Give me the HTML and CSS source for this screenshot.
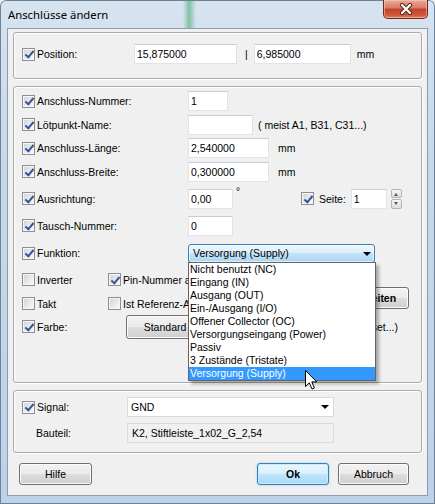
FILE: index.html
```html
<!DOCTYPE html>
<html lang="de">
<head>
  <meta charset="UTF-8" />
  <title>Anschlüsse ändern</title>
  <link rel="stylesheet" href="styles.css">
</head>
<body>

  <div class="window">
    <div class="titlebar">
      <span class="title">Anschlüsse ändern</span>
      <span class="close">
        <svg width="14" height="12" viewBox="0 0 14 12">
          <path d="M3 2 L11 10 M11 2 L3 10" stroke="#4a2418" stroke-width="4.2" stroke-linecap="round"/>
          <path d="M3 2 L11 10 M11 2 L3 10" stroke="#fff" stroke-width="2.4" stroke-linecap="round"/>
        </svg>
      </span>
    </div>

    <div class="client">

      <!-- Position -->
      <div class="panel p-pos">
        <div class="row">
          <label class="lbl w-pos"><span class="cb on"></span>Position:</label>
          <input class="field" style="width:103px" value="15,875000">
          <span class="sep">|</span>
          <input class="field" style="width:97px" value="6,985000">
          <span class="unit">mm</span>
        </div>
      </div>

      <!-- Anschluss -->
      <div class="panel p-main">
        <div class="row">
          <label class="lbl w-main"><span class="cb on"></span>Anschluss-Nummer:</label>
          <input class="field" style="width:40px" value="1">
        </div>
        <div class="row tight">
          <label class="lbl w-main"><span class="cb on"></span>Lötpunkt-Name:</label>
          <input class="field" style="width:65px" value="">
          <span class="hint">( meist A1, B31, C31...)</span>
        </div>
        <div class="row tight">
          <label class="lbl w-main"><span class="cb on"></span>Anschluss-Länge:</label>
          <input class="field" style="width:81px" value="2,540000">
          <span class="unit u2">mm</span>
        </div>
        <div class="row tight">
          <label class="lbl w-main"><span class="cb on"></span>Anschluss-Breite:</label>
          <input class="field" style="width:81px" value="0,300000">
          <span class="unit u2">mm</span>
        </div>
        <div class="row wide">
          <label class="lbl w-main"><span class="cb on"></span>Ausrichtung:</label>
          <input class="field" style="width:45px" value="0,00">
          <span class="deg">°</span>
          <label class="lbl seite"><span class="cb on"></span>Seite:</label>
          <input class="field" style="width:36px" value="1">
          <span class="spin"><span class="up"></span><span class="down"></span></span>
        </div>
        <div class="row wide">
          <label class="lbl w-main"><span class="cb on"></span>Tausch-Nummer:</label>
          <input class="field" style="width:45px" value="0">
        </div>
        <div class="row r-func">
          <label class="lbl w-main"><span class="cb on"></span>Funktion:</label>
          <div class="combo focus" style="width:187px">Versorgung (Supply)</div>
        </div>

        <div class="opts">
          <label class="lbl"><span class="cb"></span>Inverter</label>
          <label class="lbl"><span class="cb on"></span>Pin-Nummer anzeigen</label>
          <button class="btn bold edit">Bearbeiten</button>
          <label class="lbl"><span class="cb"></span>Takt</label>
          <label class="lbl"><span class="cb"></span>Ist Referenz-Anschluss</label>
        </div>

        <div class="row r-color">
          <label class="lbl w-color"><span class="cb on"></span>Farbe:</label>
          <button class="btn std">Standard</button>
          <span class="reset">(Reset...)</span>
        </div>
      </div>

      <!-- Signal -->
      <div class="panel p-sig">
        <div class="row">
          <label class="lbl w-sig"><span class="cb on"></span>Signal:</label>
          <div class="combo" style="width:207px">GND</div>
        </div>
        <div class="row r-part">
          <label class="lbl w-sig indent">Bauteil:</label>
          <div class="field ro" style="width:207px">K2, Stiftleiste_1x02_G_2,54</div>
        </div>
      </div>

      <div class="buttons">
        <button class="btn b-help">Hilfe</button>
        <button class="btn b-ok bold">Ok</button>
        <button class="btn b-cancel">Abbruch</button>
      </div>
    </div>

    <!-- open list of the Funktion combo -->
    <div class="dropdown">
      <div>Nicht benutzt (NC)</div>
      <div>Eingang (IN)</div>
      <div>Ausgang (OUT)</div>
      <div>Ein-/Ausgang (I/O)</div>
      <div>Offener Collector (OC)</div>
      <div>Versorgungseingang (Power)</div>
      <div>Passiv</div>
      <div>3 Zustände (Tristate)</div>
      <div class="sel">Versorgung (Supply)</div>
    </div>

    <svg class="cursor" width="13" height="21" viewBox="0 0 13 21">
      <path d="M0.5 0.5 L0.5 16.5 L4.3 12.8 L7 19 L9.4 18 L6.8 11.9 L11.8 11.9 Z" fill="#fff" stroke="#000" stroke-width="1" stroke-linejoin="round"/>
    </svg>
  </div>

</body>
</html>
```

FILE: styles.css
```css
body {
  margin: 0;
  font-family: 'Liberation Sans', Arial, sans-serif;
  font-size: 10.5px;
  color: #000;
  background: #e9eef4;
}

.window {
  position: relative;
  width: 435px;
  height: 504px;
  box-sizing: border-box;
  padding: 0 7px 8px 7px;
  display: flex;
  flex-direction: column;
  overflow: hidden;
  border-radius: 6px 6px 0 0;
  background:
    linear-gradient(90deg, rgba(60, 165, 105, 0) 183px, rgba(60, 165, 105, .55) 189px, rgba(60, 165, 105, 0) 196px) top left / 100% 28px no-repeat,
    linear-gradient(#d7e3ef, #c7d9eb 30%, #bcd2e9);
  box-shadow: inset 0 0 0 1px #6f8196;
}

/* title bar */
.titlebar {
  height: 28px;
  flex-shrink: 0;
  display: flex;
  align-items: flex-start;
}

.title {
  font-family: 'Noto Sans', sans-serif;
  font-size: 11.3px;
  margin: 7px 0 0 1px;
}

.close {
  margin-left: auto;
  width: 45px;
  height: 19px;
  box-sizing: border-box;
  display: flex;
  align-items: center;
  justify-content: center;
  border: 1px solid #6b2c1f;
  border-top: none;
  border-radius: 0 0 5px 5px;
  background: linear-gradient(#e9a999, #d67a66 45%, #c4402a 50%, #d2583c 85%, #e08a62);
  box-shadow: inset 0 0 0 1px rgba(255, 210, 190, .5);
}

/* client area */
.client {
  flex: 1;
  background: #f0f0f0;
  border: 1px solid #8e9cac;
  padding: 1px 5px 0;
  display: flex;
  flex-direction: column;
}

.panel {
  box-sizing: border-box;
  border: 1px solid #a9abad;
  border-radius: 3px;
  box-shadow: inset 1px 1px 0 #fff, 1px 1px 0 #fff;
  padding-left: 8px;
}

.p-pos {
  margin-top: 2px;
  height: 47px;
  padding-top: 11px;
}

.p-main {
  margin-top: 7px;
  height: 297px;
  padding-top: 4px;
  padding-right: 12px;
}

.p-sig {
  margin-top: 7px;
  height: 63px;
  padding-top: 6px;
}

.row {
  display: flex;
  align-items: center;
  height: 20px;
}

.row.tight { margin-top: 3.67px; }
.row.wide { margin-top: 7px; }
.r-func { margin-top: 8px; height: 19px; }
.r-color { margin-top: 1px; height: 24px; }
.r-part { margin-top: 6px; }

.lbl {
  display: flex;
  align-items: center;
  gap: 2px;
  flex-shrink: 0;
  white-space: nowrap;
}

.w-pos { width: 112px; }
.w-main { width: 166px; }
.w-color { width: 104px; }
.w-sig { width: 105px; }
.indent { padding-left: 14px; box-sizing: border-box; }

/* checkbox */
.cb {
  position: relative;
  width: 13px;
  height: 13px;
  box-sizing: border-box;
  border: 1px solid #8f8f8f;
  background: linear-gradient(135deg, #cdd2da, #e9ecf0 60%, #fbfbfb);
  box-shadow: inset 0 0 0 1px #f6f6f6;
  flex-shrink: 0;
}

.cb.on::after {
  content: "";
  position: absolute;
  left: 3.5px;
  top: 0.5px;
  width: 3px;
  height: 7px;
  border: solid #3d5296;
  border-width: 0 2px 2px 0;
  transform: rotate(40deg);
}

/* text fields */
.field {
  height: 20px;
  box-sizing: border-box;
  border: 1px solid #e2e3ea;
  border-top-color: #c8ccd3;
  background: #fff;
  padding: 0 2px;
  font: inherit;
  color: #000;
  display: flex;
  align-items: center;
  outline: none;
}

.field.ro {
  background: #f0f0f0;
  border-color: #dadada;
  padding-left: 4px;
}

.sep { margin: 0 6px 0 8px; }
.unit { margin-left: 6px; }
.unit.u2 { margin-left: 9px; }
.hint { margin-left: 5px; }

.deg {
  align-self: flex-start;
  margin: -3px 0 0 3px;
  font-size: 10px;
}

.seite {
  margin-left: 61px;
  gap: 5px;
  margin-right: 5px;
}

.spin {
  margin-left: 4px;
  width: 11px;
  height: 20px;
  display: flex;
  flex-direction: column;
  gap: 1px;
}

.spin span {
  position: relative;
  flex: 1;
  border: 1px solid #b3b3b3;
  border-radius: 2px;
  background: linear-gradient(#f6f6f6, #dedede);
}

.spin span::after {
  content: "";
  position: absolute;
  left: 2px;
  top: 3px;
  border-left: 2.5px solid transparent;
  border-right: 2.5px solid transparent;
}

.spin .up::after { border-bottom: 3px solid #4c5a6e; }
.spin .down::after { border-top: 3px solid #4c5a6e; top: 2px; }

/* combo boxes */
.combo {
  position: relative;
  height: 20px;
  box-sizing: border-box;
  border: 1px solid #d8dadf;
  background: #fff;
  padding-left: 3px;
  display: flex;
  align-items: center;
}

.combo::after {
  content: "";
  position: absolute;
  right: 4px;
  top: 7px;
  border-left: 4px solid transparent;
  border-right: 4px solid transparent;
  border-top: 4px solid #000;
}

.combo.focus {
  height: 19px;
  border-color: #3c7fb1;
  border-radius: 3px;
  background: linear-gradient(#ecf6fd, #dceffb 45%, #c2e2f8 50%, #acd6f3);
  box-shadow: inset 0 0 0 1px rgba(255, 255, 255, .6);
  padding-left: 4px;
}

.combo.focus::after { right: 3px; top: 7px; }

/* option checkboxes behind the list */
.opts {
  display: grid;
  grid-template-columns: 86px 1fr 80px;
  grid-template-rows: 20px 20px;
  row-gap: 4px;
  margin-top: 7px;
  align-items: center;
}

.edit {
  grid-column: 3;
  grid-row: 1 / 3;
  align-self: end;
  margin-bottom: 5px;
}

/* buttons */
.btn {
  height: 22px;
  box-sizing: border-box;
  border: 1px solid #707070;
  border-radius: 3px;
  background: linear-gradient(#f2f2f2, #ebebeb 48%, #dddddd 52%, #cfcfcf);
  box-shadow: inset 0 0 0 1px #fbfbfb;
  font: inherit;
  color: #000;
  padding: 0;
}

.bold { font-weight: bold; }

.std {
  width: 78px;
  height: 24px;
}

.reset { margin: 0 11px 0 auto; }

.buttons {
  margin-top: 10px;
  display: flex;
  padding: 0 13px 0 6px;
}

.b-help { width: 73px; }
.b-ok { width: 72px; margin-left: auto; }
.b-cancel { width: 71px; margin-left: 9px; }

.b-ok {
  border-color: #3c7fb1;
  background: linear-gradient(#eaf6fd, #d9f0fc 48%, #bee6fd 52%, #a7d9f5);
  box-shadow: inset 0 0 0 1px #c8ebfd, 0 0 2px #7ec4ee;
}

/* open drop-down list */
.dropdown {
  position: absolute;
  left: 188px;
  top: 262px;
  width: 188px;
  box-sizing: border-box;
  border: 1px solid #646464;
  background: #fff;
  box-shadow: 3px 3px 3px rgba(0, 0, 0, .3);
}

.dropdown div {
  height: 13px;
  line-height: 13px;
  padding-left: 1px;
  white-space: nowrap;
}

.dropdown .sel {
  background: #3399ff;
  color: #fff;
}

.cursor {
  position: absolute;
  left: 305px;
  top: 370px;
}
```
